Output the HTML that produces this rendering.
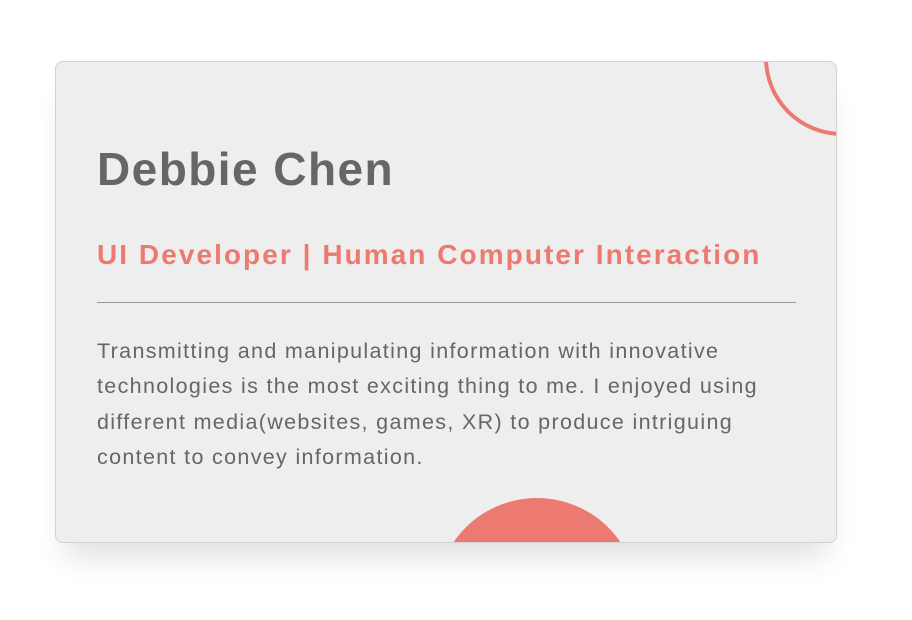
<!DOCTYPE html>
<html><head><meta charset="utf-8"><style>
html,body{margin:0;padding:0;background:#fff;width:912px;height:620px;overflow:hidden}
.card{position:absolute;left:55px;top:61px;width:780px;height:480px;background:#eeeeee;border:1px solid #d2d2d2;border-radius:8px;overflow:hidden;box-shadow:0 24px 28px -10px rgba(0,0,0,0.12);font-family:"Liberation Sans",sans-serif}
.c1{position:absolute;left:708px;top:-82px;width:148px;height:148px;border:4px solid #ec7a70;border-radius:50%}
.c2{position:absolute;left:380px;top:436px;width:202px;height:202px;background:#ec7a70;border-radius:50%}
h1{position:absolute;left:41px;top:80px;margin:0;font-size:46px;font-weight:bold;color:#666;letter-spacing:1.45px;white-space:nowrap}
h2{position:absolute;left:41px;top:177px;margin:0;font-size:28px;font-weight:bold;color:#ec7a70;white-space:nowrap;letter-spacing:2.05px}
.hr{position:absolute;left:41px;top:240px;width:699px;height:1px;background:#9a9a9a}
p{position:absolute;left:41px;top:272px;margin:0;font-size:21.5px;line-height:35.3px;color:#666;white-space:nowrap;letter-spacing:1.33px}
</style></head><body>
<div class="card">
<div class="c1"></div>
<div class="c2"></div>
<h1>Debbie Chen</h1>
<h2>UI Developer | Human Computer Interaction</h2>
<div class="hr"></div>
<p>Transmitting and manipulating information with innovative<br>technologies is the most exciting thing to me. I enjoyed using<br>different media(websites, games, XR) to produce intriguing<br>content to convey information.</p>
</div>
</body></html>
